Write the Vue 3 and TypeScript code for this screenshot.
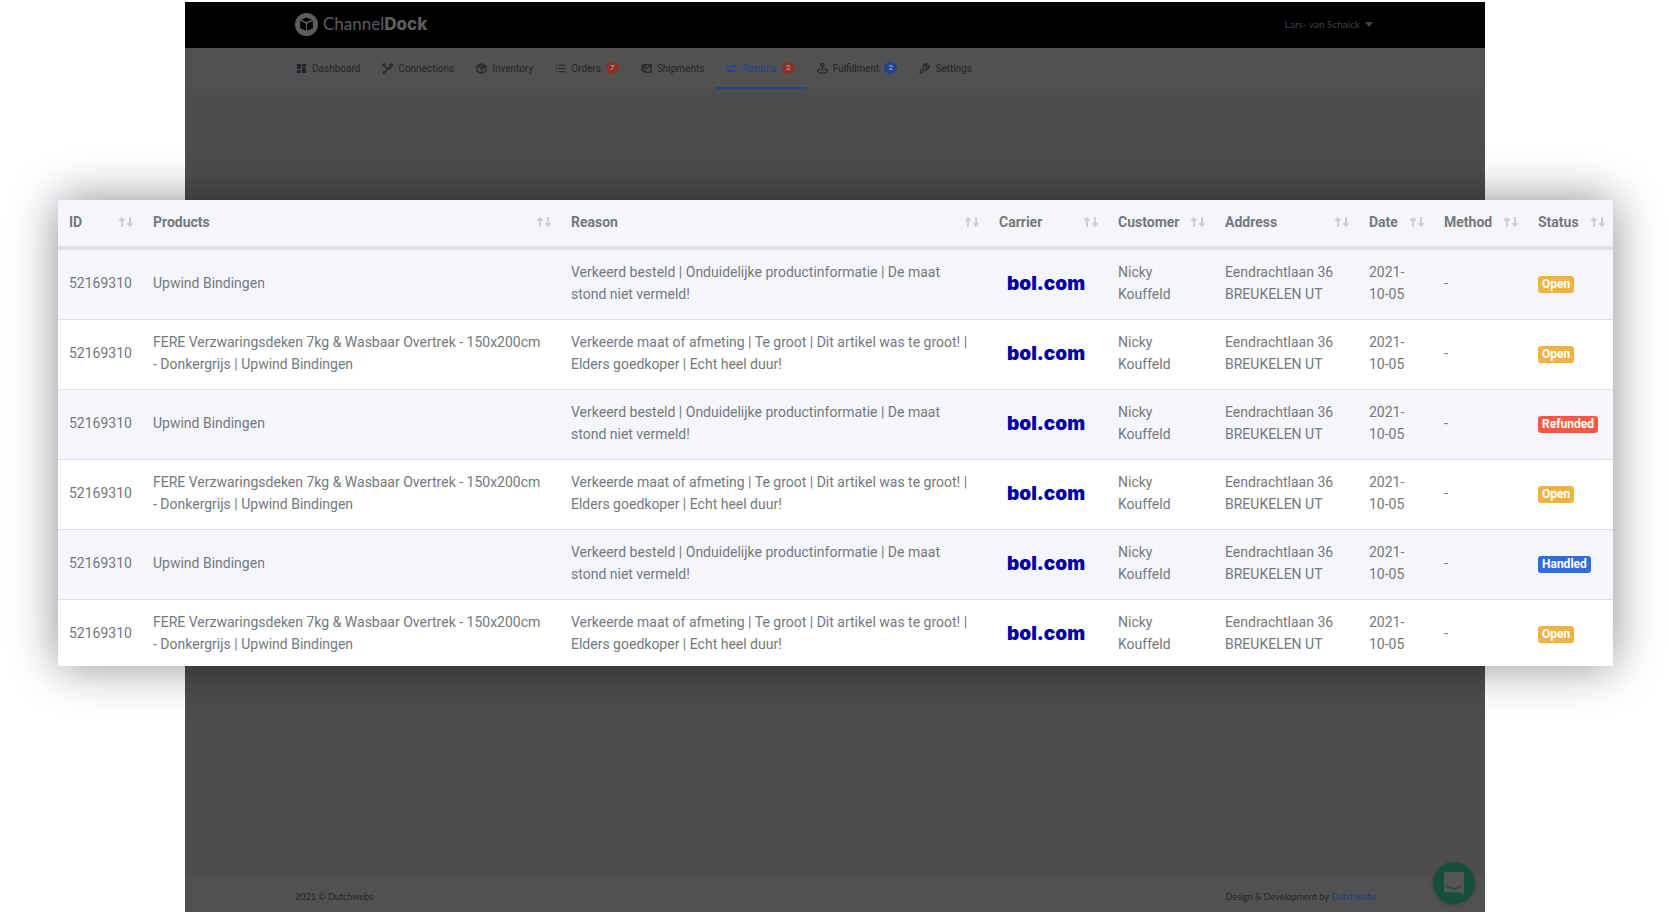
<script setup lang="ts">
interface NavItem { label: string; icon: string; badge?: number; tone?: string; active?: boolean }
interface ReturnRow { products: string; reason: string; status: string; tone: string }

const nav: NavItem[] = [
  { label: 'Dashboard', icon: 'dashboard' },
  { label: 'Connections', icon: 'connections' },
  { label: 'Inventory', icon: 'inventory' },
  { label: 'Orders', icon: 'orders', badge: 7, tone: 'red' },
  { label: 'Shipments', icon: 'shipments' },
  { label: 'Returns', icon: 'returns', badge: 2, tone: 'red', active: true },
  { label: 'Fulfillment', icon: 'fulfillment', badge: 2, tone: 'blue' },
  { label: 'Settings', icon: 'settings' },
]

const columns: { label: string; key: string }[] = [
  { label: 'ID', key: 'id' },
  { label: 'Products', key: 'products' },
  { label: 'Reason', key: 'reason' },
  { label: 'Carrier', key: 'carrier' },
  { label: 'Customer', key: 'customer' },
  { label: 'Address', key: 'address' },
  { label: 'Date', key: 'date' },
  { label: 'Method', key: 'method' },
  { label: 'Status', key: 'status' },
]

const short = {
  products: 'Upwind Bindingen',
  reason: 'Verkeerd besteld | Onduidelijke productinformatie | De maat stond niet vermeld!',
}
const long = {
  products: 'FERE Verzwaringsdeken 7kg & Wasbaar Overtrek - 150x200cm - Donkergrijs | Upwind Bindingen',
  reason: 'Verkeerde maat of afmeting | Te groot | Dit artikel was te groot! | Elders goedkoper | Echt heel duur!',
}
const rows: ReturnRow[] = [
  { ...short, status: 'Open', tone: 'open' },
  { ...long, status: 'Open', tone: 'open' },
  { ...short, status: 'Refunded', tone: 'refunded' },
  { ...long, status: 'Open', tone: 'open' },
  { ...short, status: 'Handled', tone: 'handled' },
  { ...long, status: 'Open', tone: 'open' },
]
</script>

<template>
  <div class="stage">
    <div class="page">
      <header class="topbar">
        <a class="brand" href="#">
          <svg class="brand-mark" viewBox="0 0 24 24" aria-hidden="true">
            <circle cx="12" cy="12" r="12" fill="#5d5d5d" />
            <path d="M12 4.8 17.6 7 12 9.3 6.4 7zM5.4 8.4l6 2.5v7.7l-6-2.7zM18.6 8.4l-6 2.5v7.7l6-2.7z" fill="#000" />
          </svg>
          <span class="brand-name">Channel<b>Dock</b></span>
        </a>
        <button class="user" type="button">Lars- van Schaick <span class="caret"></span></button>
      </header>

      <nav class="nav">
        <a v-for="item in nav" :key="item.label" href="#" class="nav-item" :class="{ active: item.active }">
          <svg class="nav-icon" viewBox="0 0 24 24" fill="none" stroke="currentColor" stroke-width="2.5" aria-hidden="true">
            <path v-if="item.icon === 'dashboard'" d="M2 2h9v11H2zM13 2h9v6h-9zM2 15h9v7H2zM13 10h9v12h-9z" fill="currentColor" stroke="none" />
            <g v-else-if="item.icon === 'connections'">
              <circle cx="4.5" cy="4.5" r="2.5" /><circle cx="20" cy="5" r="2.5" /><circle cx="5" cy="20" r="2.5" />
              <path d="M6 7l5 6M18 7l-7 6M11 13c0 4-2 6-4 6.5M20 8c0 5-4 6-9 5" />
            </g>
            <path v-else-if="item.icon === 'inventory'" d="M12 1.5 22 6.5v11l-10 5-10-5v-11zM2 6.500l10 5 10-5M12 11.500v11M7 4l10 5v5" />
            <path v-else-if="item.icon === 'orders'" d="M8 5h14M8 12h14M8 19h14M2 5h3M2 12h3M2 19h3" />
            <path v-else-if="item.icon === 'shipments'" d="M5 13V4h17v16H9M5 5l8 7 9-7M0 5h5M0 9h5M2 13h7v7l-7-4z" />
            <g v-else-if="item.icon === 'returns'">
              <path d="M1 7h16M23 17H7" stroke-width="3" />
              <path d="M16 2l7 5-7 5zM8 12l-7 5 7 5z" fill="currentColor" stroke="none" />
            </g>
            <g v-else-if="item.icon === 'fulfillment'">
              <circle cx="12" cy="5" r="3.5" />
              <path d="M12 9v8M8 13c-5 0-7 3-6 6 1 4 19 4 20 0 1-3-1-6-6-6" />
            </g>
            <path v-else d="M21.5 6.500 17 10l-3-3 3.500-4.500C13 .8 8.500 4 10 10l-7.500 8c-2 3 1 5 3.500 3.500L14 14c6 1.500 9-3 7.500-7.500z" />
          </svg>
          <span>{{ item.label }}</span>
          <span v-if="item.badge" class="count" :class="item.tone">{{ item.badge }}</span>
        </a>
      </nav>

      <main class="body"></main>

      <footer class="footer">
        <span>2021 © Dutchwebs</span>
        <span>Design &amp; Development by <a href="#">Dutchwebs</a></span>
      </footer>

      <button class="chat" type="button" aria-label="Open chat">
        <svg viewBox="0 0 24 26" aria-hidden="true">
          <path d="M3 1h18q2 0 2 2v23l-5-3H3q-2 0-2-2V3q0-2 2-2z" fill="#555" />
          <path d="M4.500 16.500q7.500 5.500 15 0" fill="none" stroke="#14503b" stroke-width="1.400" stroke-linecap="round" />
        </svg>
      </button>
    </div>

    <section class="card">
      <table>
        <colgroup>
          <col v-for="c in columns" :key="c.key" :class="'col-' + c.key" />
        </colgroup>
        <thead>
          <tr>
            <th v-for="c in columns" :key="c.key" scope="col">
              <button class="sort" type="button">
                {{ c.label }}
                <svg viewBox="0 0 14 10" aria-hidden="true">
                  <path d="M3 10V2M.5 4 3 1l2.500 3M11 0v8M8.500 6l2.500 3 2.500-3" fill="none" stroke="#cfd1d5" stroke-width="2" />
                </svg>
              </button>
            </th>
          </tr>
        </thead>
        <tbody>
          <tr v-for="(row, i) in rows" :key="i">
            <td>52169310</td>
            <td class="wrap">{{ row.products }}</td>
            <td class="wrap">{{ row.reason }}</td>
            <td><span class="bol">bol.com</span></td>
            <td>Nicky<br />Kouffeld</td>
            <td>Eendrachtlaan 36<br />BREUKELEN UT</td>
            <td>2021-<br />10-05</td>
            <td>-</td>
            <td><span class="status" :class="row.tone">{{ row.status }}</span></td>
          </tr>
        </tbody>
      </table>
    </section>
  </div>
</template>

<style>
body { margin: 0; background: #fff; }
</style>

<style scoped>
.stage {
  position: relative;
  box-sizing: border-box;
  min-height: 100vh;
  padding: 2px 186px 1px 185px;
  display: flex;
  font-family: Roboto, "Noto Sans", sans-serif;
  overflow: hidden;
}
.page {
  position: relative;
  flex: 1;
  display: flex;
  flex-direction: column;
  background: #4d4d4d;
  color: #222528;
  font-size: 10px;
}
a { color: inherit; text-decoration: none; }
button { border: 0; padding: 0; background: none; font: inherit; color: inherit; cursor: pointer; }
.topbar {
  box-sizing: border-box;
  height: 46px;
  padding: 0 112px 2px 110px;
  display: flex;
  align-items: center;
  justify-content: space-between;
  background: #000;
}
.brand { display: flex; align-items: center; gap: 5px; color: #5d5d5d; }
.brand-mark { width: 23px; height: 23px; }
.brand-name { font: 400 17px/22px Lato, sans-serif; }
.brand-name b { font-family: Inter, sans-serif; font-weight: 800; }
.user { display: flex; align-items: center; gap: 5px; color: #3f434b; font-family: Lato, sans-serif; }
.caret { border: 4px solid transparent; border-top: 5px solid #3f434b; border-bottom: 0; }
.nav {
  height: 41px;
  padding: 0 100px;
  display: flex;
  background: #515151;
  border-bottom: 1px solid #494a4c;
}
.nav-item {
  display: flex;
  align-items: center;
  gap: 5px;
  padding: 1px 11px 0;
  border-bottom: 2px solid transparent;
}
.nav-item.active { color: #1d4596; border-color: #1d4596; }
.nav-icon { width: 11px; height: 11px; }
.count {
  width: 13px;
  border-radius: 6px;
  text-align: center;
  font-size: 8px;
  font-weight: 700;
  line-height: 12px;
  color: #969696;
}
.count.red { background: #8f3025; }
.count.blue { background: #1d4592; }
.body { flex: 1; }
.footer {
  height: 37px;
  padding: 4px 109px 0 110px;
  box-sizing: border-box;
  display: flex;
  align-items: center;
  justify-content: space-between;
  background: #515151;
  border-top: 1px solid #494b4d;
  font-family: Lato, sans-serif;
  font-size: 9px;
}
.footer a { color: #1b3f86; }
.chat {
  position: absolute;
  right: 10px;
  bottom: 8px;
  width: 42px;
  height: 42px;
  border-radius: 50%;
  background: #14503b;
  box-shadow: 0 1px 4px rgba(0, 0, 0, .2);
  display: grid;
  place-items: center;
}
.chat svg { width: 22px; height: 24px; }
.card {
  position: absolute;
  top: 200px;
  left: 58px;
  right: 58px;
  background: #fff;
  box-shadow: 0 0 44px rgba(0, 0, 0, .45);
}
table { width: 100%; table-layout: fixed; border-collapse: separate; border-spacing: 0; color: #74787e; font-size: 14px; line-height: 22px; }
.col-id { width: 83px; }
.col-products { width: 418px; }
.col-reason { width: 428px; }
.col-carrier { width: 119px; }
.col-customer { width: 107px; }
.col-address { width: 144px; }
.col-date { width: 75px; }
.col-method { width: 94px; }
.col-status { width: 87px; }
th { box-sizing: border-box; padding: 0 8px 2px 12px; height: 50px; border-bottom: 4px solid #e0e2e7; background: #f5f6fb; text-align: left; }
.sort { width: 100%; display: flex; align-items: center; justify-content: space-between; font-weight: 700; }
.sort svg { width: 14px; height: 10px; }
td { padding: 11px 8px 14px 12px; height: 44px; border-bottom: 1px solid #dee2e8; vertical-align: middle; }
td.wrap { padding-right: 14px; }
th:first-child, td:first-child { padding-left: 11px; }
tbody tr:nth-child(odd) { background: #f5f6fb; }
tbody tr:last-child td { border-bottom: 0; padding-bottom: 11px; }
.bol { display: block; padding: 1px 0 0 8px; font: 900 19px/22px Inter, sans-serif; color: #0000a4; }
.status {
  display: inline-block;
  padding: 0 4px;
  border-radius: 3px;
  color: #fff;
  font-size: 12px;
  font-weight: 700;
  line-height: 17px;
}
.open { background: #efb33f; }
.refunded { background: #fc5844; }
.handled { background: #316be0; }
</style>
